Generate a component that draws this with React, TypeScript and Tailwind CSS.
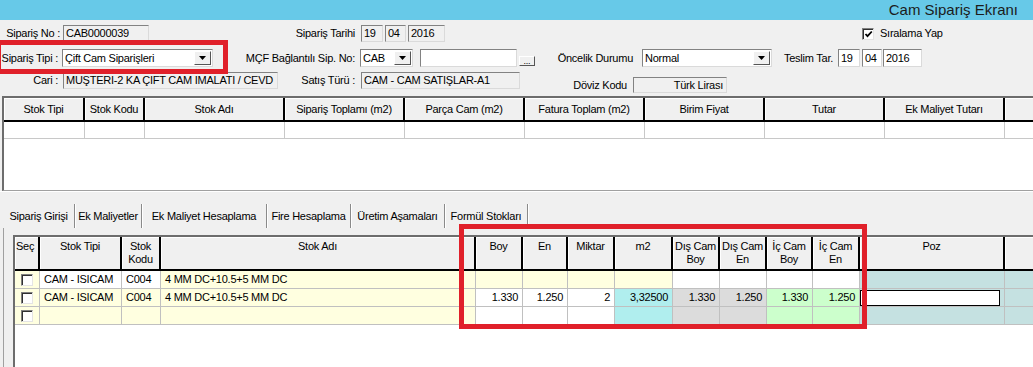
import React from "react";

// sunken text box used all over the form
function Box({
    className,
    children,
    white,
    right,
}: {
  className: string;
  children?: React.ReactNode;
  white?: boolean;
  right?: boolean;
}) {
    return (
        <div
            className={`${className} h-full flex items-center border border-t-[#828282] border-l-[#828282] border-r-[#dadada] border-b-[#dadada] overflow-hidden whitespace-nowrap ${
                white ? "bg-white" : "bg-[#f0f0f0]"
            } ${right ? "justify-end pr-[3px]" : "pl-[2px]"}`}
        >
            {children}
        </div>
    );
}

function Arrow() {
    return (
        <svg width="7" height="4" viewBox="0 0 7 4">
            <path d="M0 0h7L3.5 4z" fill="#000" />
        </svg>
    );
}

function Sel({ className, value }: { className: string; value: string }) {
    return (
        <div
            className={`${className} h-full flex items-stretch bg-white border border-t-[#828282] border-l-[#828282] border-r-[#dadada] border-b-[#dadada] p-[1px]`}
        >
            <span className="flex-1 flex items-center pl-[1px] whitespace-nowrap overflow-hidden">
                {value}
            </span>
            <span className="w-[17px] flex items-center justify-center bg-[#f0f0f0] border border-t-white border-l-white border-r-[#555] border-b-[#555]">
                <Arrow />
            </span>
        </div>
    );
}

function Check({ checked }: { checked?: boolean }) {
    return (
        <span className="w-[12px] h-[12px] bg-white border border-t-[#808080] border-l-[#808080] border-r-[#e4e4e4] border-b-[#e4e4e4] shadow-[inset_1px_1px_0_#303030] flex items-center justify-center">
            {checked && (
                <svg width="9" height="8" viewBox="0 0 9 8">
                    <path d="M1.5 4l2 2.2L7.8 1.5" stroke="#000" strokeWidth="1.8" fill="none" />
                </svg>
            )}
        </span>
    );
}

const topCols = [
    { w: "w-[81px]", label: "Stok Tipi" },
    { w: "w-[60px]", label: "Stok Kodu" },
    { w: "w-[140px]", label: "Stok Adı" },
    { w: "w-[120px]", label: "Sipariş Toplamı (m2)" },
    { w: "w-[120px]", label: "Parça Cam (m2)" },
    { w: "w-[120px]", label: "Fatura Toplam (m2)" },
    { w: "w-[120px]", label: "Birim Fiyat" },
    { w: "w-[120px]", label: "Tutar" },
    { w: "w-[120px]", label: "Ek Maliyet Tutarı" },
    { w: "w-[60px]", label: "" },
];

const tabs = [
    { w: "w-[72px]", label: "Sipariş Girişi" },
    { w: "w-[67px]", label: "Ek Maliyetler" },
    { w: "w-[125px]", label: "Ek Maliyet Hesaplama" },
    { w: "w-[84px]", label: "Fire Hesaplama" },
    { w: "w-[94px]", label: "Üretim Aşamaları" },
    { w: "w-[83px]", label: "Formül Stokları" },
];

const cols: { w: string; label: React.ReactNode; left?: boolean }[] = [
    { w: "w-[25px]", label: "Seç", left: true },
    { w: "w-[82px]", label: "Stok Tipi" },
    { w: "w-[39px]", label: <>Stok<br />Kodu</> },
    { w: "w-[315px]", label: "Stok Adı" },
    { w: "w-[47px]", label: "Boy" },
    { w: "w-[45px]", label: "En" },
    { w: "w-[47px]", label: "Miktar" },
    { w: "w-[58px]", label: "m2" },
    { w: "w-[47px]", label: <>Dış Cam<br />Boy</> },
    { w: "w-[47px]", label: <>Dış Cam<br />En</> },
    { w: "w-[46px]", label: <>İç Cam<br />Boy</> },
    { w: "w-[47px]", label: <>İç Cam<br />En</> },
    { w: "w-[145px]", label: "Poz" },
    { w: "w-[60px]", label: "" },
];

const Y = "bg-[#ffffe0]";
const W = "bg-white";
const C = "bg-[#b0eeee]";
const G = "bg-[#dcdcdc]";
const N = "bg-[#ccffcc]";
const T = "bg-[#c5e1e1]";

const rowBgs = [
    [Y, W, W, Y, Y, Y, Y, Y, W, W, W, W, T, T],
    [Y, Y, Y, Y, W, W, W, C, G, G, N, N, T, T],
    [Y, Y, Y, Y, W, W, W, C, G, G, N, N, T, T],
];

const rowText: string[][] = [
    ["", "CAM - ISICAM", "C004", "4 MM DC+10.5+5 MM DC", "", "", "", "", "", "", "", "", "", ""],
    ["", "CAM - ISICAM", "C004", "4 MM DC+10.5+5 MM DC", "1.330", "1.250", "2", "3,32500", "1.330", "1.250", "1.330", "1.250", "", ""],
    ["", "", "", "", "", "", "", "", "", "", "", "", "", ""],
];

export default function App() {
    return (
        <div className="relative w-[1033px] h-[367px] overflow-hidden bg-[#f0f0f0] text-[11px] tracking-[-0.25px] text-black font-['Liberation_Sans',Arial,sans-serif]">
            <div className="h-[20px] bg-[#67c9e8] flex items-center justify-end pr-[15px] text-[15px] tracking-normal text-[#1c1c1c]">
                Cam Sipariş Ekranı
            </div>

            <div className="h-[76px] pt-[5px] whitespace-nowrap">
                <div className="flex items-center h-[17px]">
                    <span className="w-[61px] shrink-0 text-right pr-[1px]">Sipariş No :</span>
                    <Box className="ml-[2px] w-[86px]">CAB0000039</Box>
                    <span className="w-[212px] shrink-0 text-right pr-[6px]">Sipariş Tarihi</span>
                    <Box className="w-[22px]">19</Box>
                    <Box className="ml-[2px] w-[21px]">04</Box>
                    <Box className="ml-[2px] w-[37px]">2016</Box>
                    <span className="ml-[417px]">
                        <Check checked />
                    </span>
                    <span className="ml-[6px]">Sıralama Yap</span>
                </div>

                <div className="flex items-center h-[18px] mt-[7px]">
                    <span className="w-[60px] shrink-0 text-right pr-[2px]">Sipariş Tipi :</span>
                    <Sel className="ml-[2px] w-[151px]" value="Çift Cam Siparişleri" />
                    <span className="w-[147px] shrink-0 text-right pr-[5px]">MÇF Bağlantılı Sip. No:</span>
                    <Sel className="w-[53px]" value="CAB" />
                    <Box className="ml-[7px] w-[97px]" white />
                    <span className="ml-[2px] self-end mb-[1px] w-[16px] h-[10px] bg-[#f0f0f0] border border-t-white border-l-white border-r-[#555] border-b-[#555] flex items-end justify-center text-[9px] leading-[8px]">
                        ...
                    </span>
                    <span className="w-[107px] shrink-0 text-right pr-[9px]">Öncelik Durumu</span>
                    <Sel className="w-[130px]" value="Normal" />
                    <span className="w-[66px] shrink-0 text-right pr-[5px]">Teslim Tar.</span>
                    <Box className="w-[22px]" white>19</Box>
                    <Box className="ml-[2px] w-[20px]" white>04</Box>
                    <Box className="ml-[1px] w-[39px]" white>2016</Box>
                </div>

                <div className="flex items-start mt-[5px]">
                    <div className="flex items-center h-[17px]">
                        <span className="w-[60px] shrink-0 text-right pr-[2px]">Cari :</span>
                        <Box className="ml-[3px] w-[215px]">MUŞTERI-2 KA ÇIFT CAM IMALATI / CEVD</Box>
                        <span className="w-[83px] shrink-0 text-right pr-[6px]">Satış Türü :</span>
                        <Box className="w-[159px]">CAM - CAM SATIŞLAR-A1</Box>
                    </div>
                    <div className="flex items-center h-[16px] mt-[5px]">
                        <span className="w-[113px] shrink-0 text-right pr-[6px]">Döviz Kodu</span>
                        <Box className="w-[94px]" right>Türk Lirası</Box>
                    </div>
                </div>
            </div>

            {/* upper grid */}
            <div className="ml-[2px] h-[95px] border-t-2 border-l-2 border-t-[#6d6d6d] border-l-[#6d6d6d] border-b border-b-[#a0a0a0] bg-white overflow-hidden">
                <div className="flex h-[24px]">
                    {topCols.map((c, i) => (
                        <div
                            key={i}
                            className={`${c.w} shrink-0 flex items-center justify-center bg-[#f0f0f0] border-r-2 border-b-2 border-black shadow-[inset_1px_1px_0_#fff] whitespace-nowrap`}
                        >
                            {c.label}
                        </div>
                    ))}
                </div>
                <div className="flex h-[17px]">
                    {topCols.map((c, i) => (
                        <div key={i} className={`${c.w} shrink-0 border-r border-b border-[#c8c8c8]`} />
                    ))}
                </div>
            </div>
            <div className="h-px bg-white" />

            {/* tabs */}
            <div className="flex h-[24px] mt-[12px] pl-[3px]">
                {tabs.map((t) => (
                    <div
                        key={t.label}
                        className={`${t.w} flex items-center justify-center border-r border-r-[#8a8a8a] shadow-[1px_0_0_#fff] whitespace-nowrap`}
                    >
                        {t.label}
                    </div>
                ))}
            </div>

            {/* tab page */}
            <div className="ml-[3px] h-[150px] border-l border-[#a0a0a0] pt-[7px] pl-[9px]">
                <div className="h-full border-t-2 border-l-2 border-t-[#6d6d6d] border-l-[#6d6d6d] bg-white overflow-hidden">
                    <div className="flex h-[34px]">
                        {cols.map((c, i) => (
                            <div
                                key={i}
                                className={`${c.w} shrink-0 bg-[#f0f0f0] border-b-2 border-black shadow-[inset_1px_1px_0_#fff] pt-[3px] leading-[13px] ${
                                    i < cols.length - 1 ? "border-r-2" : ""
                                } ${c.left ? "pl-[1px]" : "text-center"}`}
                            >
                                {c.label}
                            </div>
                        ))}
                    </div>
                    {rowBgs.map((bgs, r) => (
                        <div key={r} className="flex h-[18px]">
                            {cols.map((c, i) => {
                                const txt = rowText[r][i];
                                const num = i >= 4 && i <= 11;
                                return (
                                    <div
                                        key={i}
                                        className={`${c.w} ${bgs[i]} shrink-0 flex items-center border-r border-b border-[#c0c0c0] whitespace-nowrap ${
                                            i === 0 ? "justify-center" : num ? "justify-end pr-[4px]" : "pl-[4px]"
                                        }`}
                                    >
                                        {i === 0 && <Check />}
                                        {i === 12 && r === 1 ? (
                                            <div className="-ml-[4px] mr-[2px] w-full h-[16px] bg-white border border-black" />
                                        ) : (
                                            txt
                                        )}
                                    </div>
                                );
                            })}
                        </div>
                    ))}
                </div>
            </div>

            {/* red highlight frames drawn over the screen */}
            <div className="absolute left-[-4px] top-[40px] w-[232px] h-[34px] border-[5px] border-[#e0202a]" />
            <div className="absolute left-[459px] top-[224px] w-[408px] h-[105px] border-[5px] border-[#e0202a]" />
        </div>
    );
}
